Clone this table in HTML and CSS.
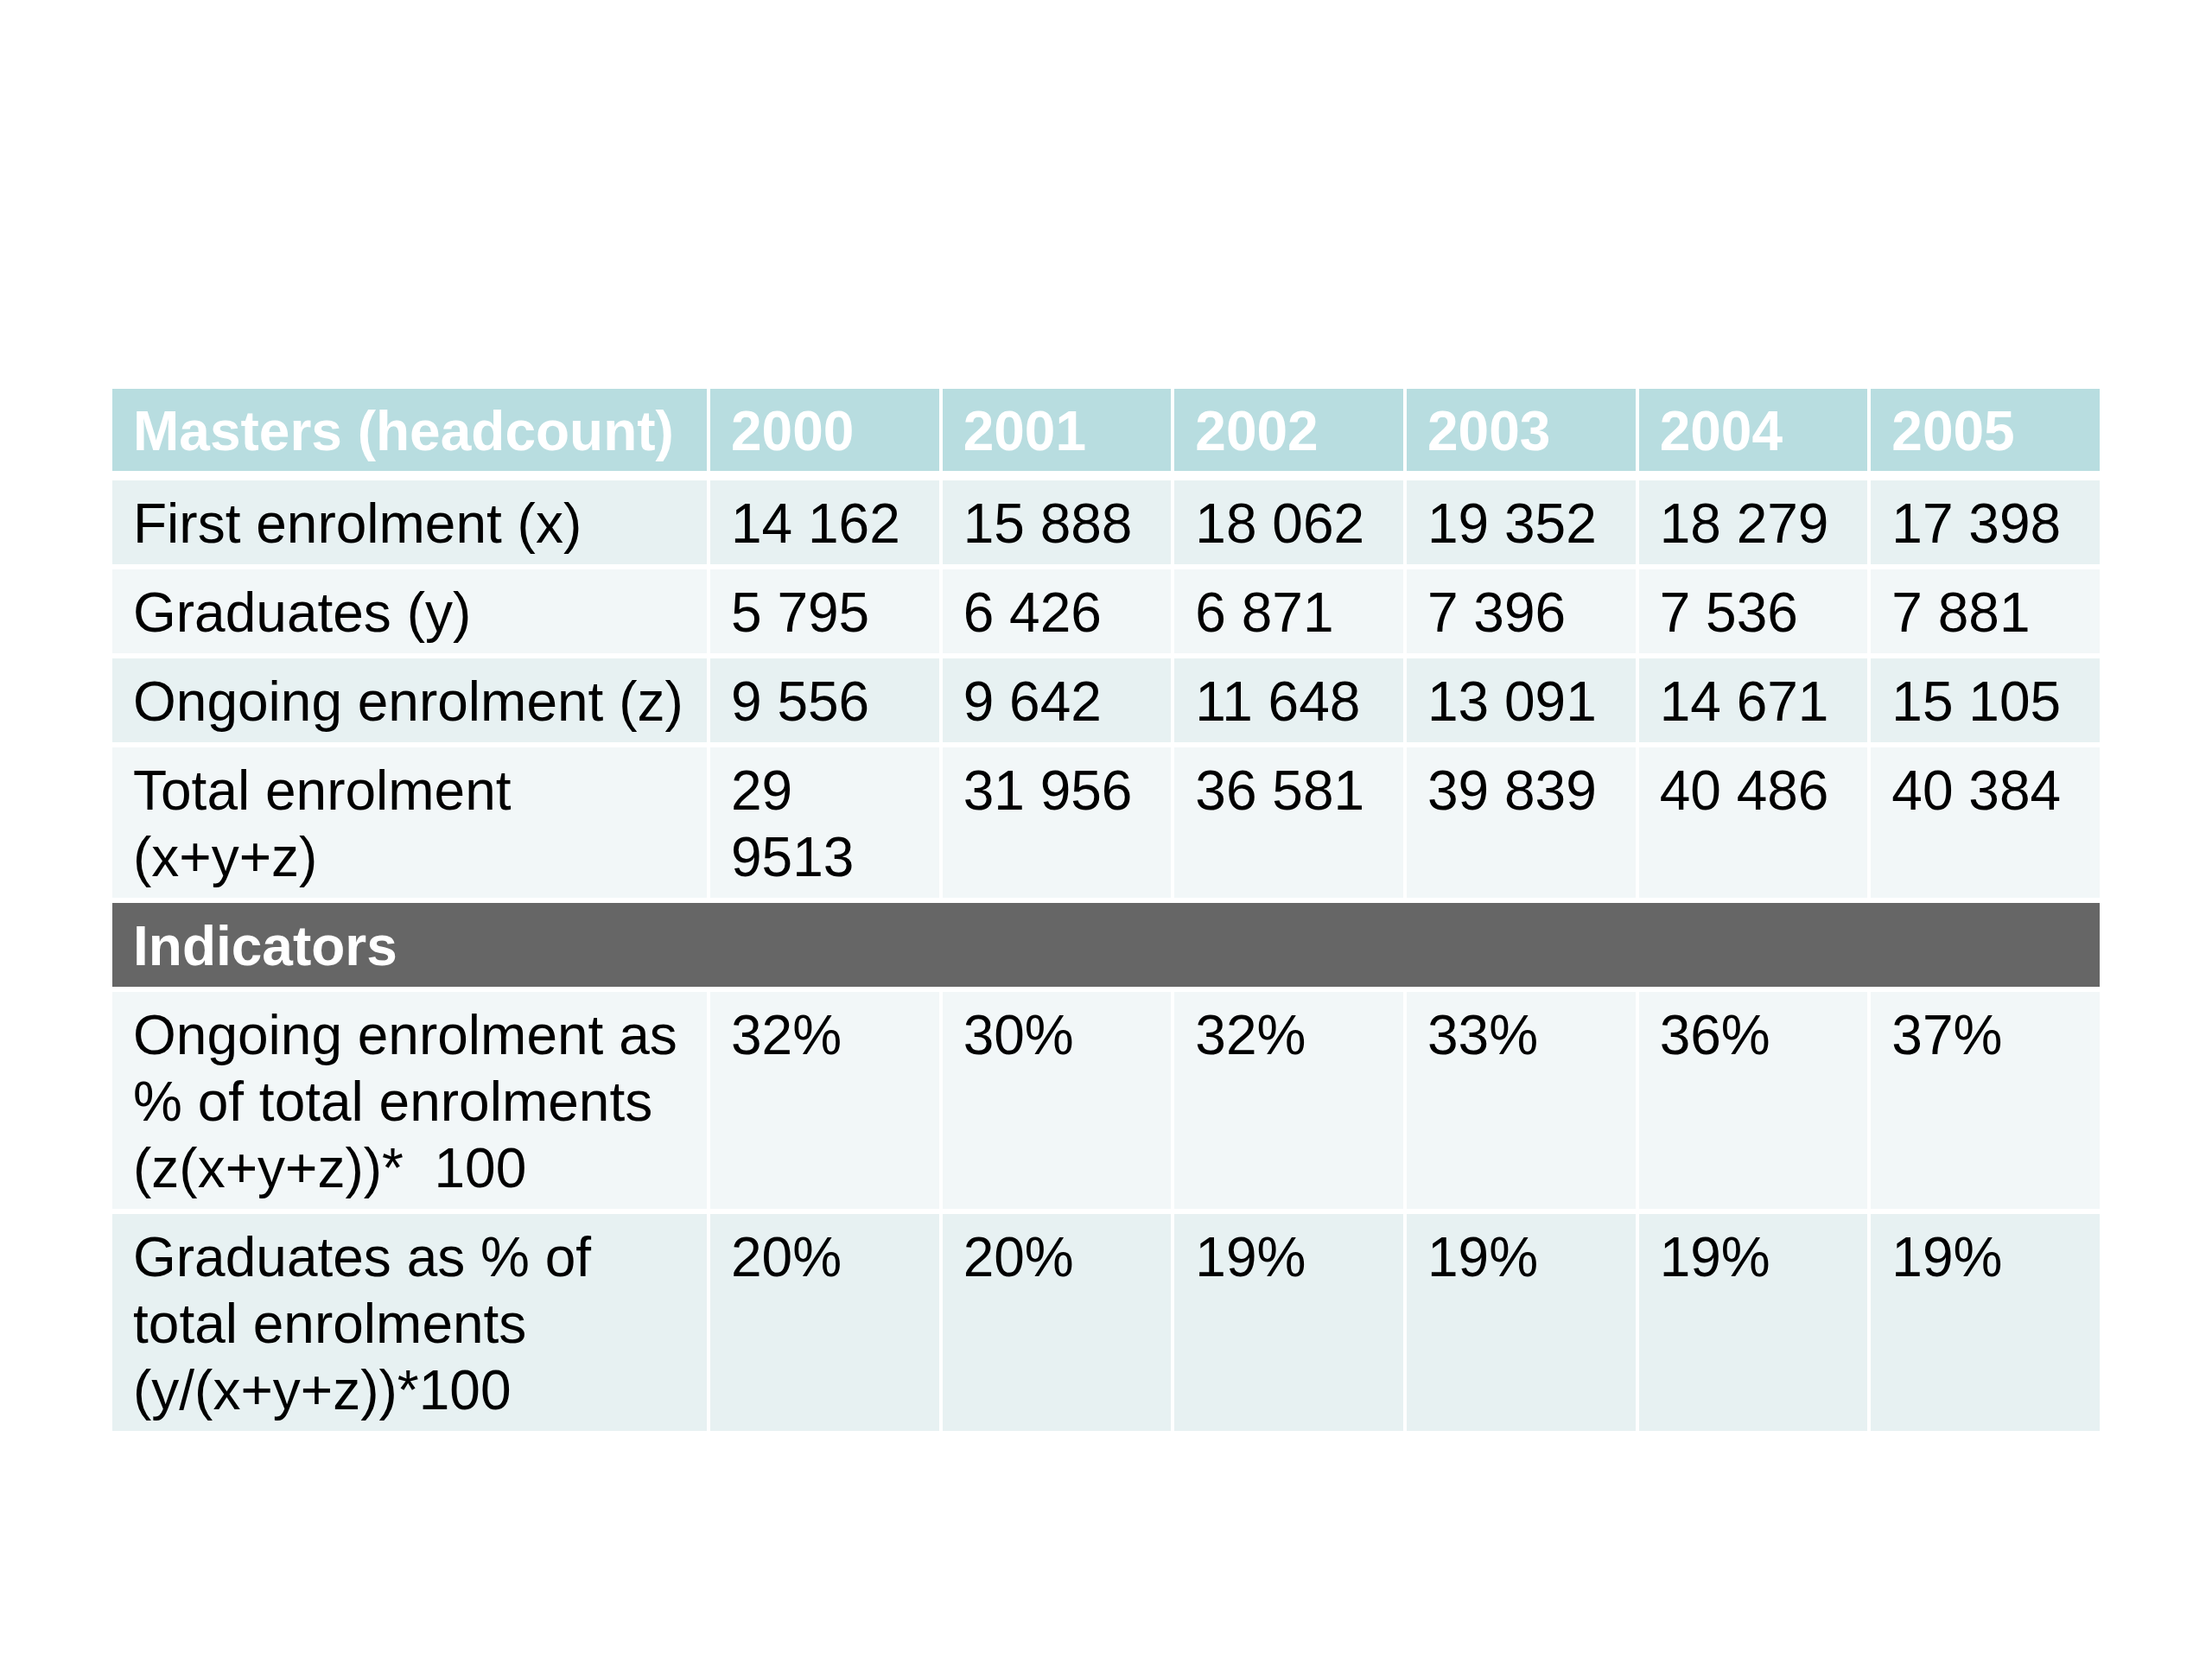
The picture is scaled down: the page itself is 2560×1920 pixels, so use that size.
FILE: index.html
```html
<!DOCTYPE html>
<html lang="en">
<head>
<meta charset="utf-8">
<title>Masters (headcount)</title>
<link rel="stylesheet" href="styles.css">
</head>
<body>
<main class="slide">
  <div class="grid" role="table">
    <div class="cell head first">Masters (headcount)</div>
    <div class="cell head">2000</div>
    <div class="cell head">2001</div>
    <div class="cell head">2002</div>
    <div class="cell head">2003</div>
    <div class="cell head">2004</div>
    <div class="cell head">2005</div>

    <div class="cell dark">First enrolment (x)</div>
    <div class="cell dark">14 162</div>
    <div class="cell dark">15 888</div>
    <div class="cell dark">18 062</div>
    <div class="cell dark">19 352</div>
    <div class="cell dark">18 279</div>
    <div class="cell dark">17 398</div>

    <div class="cell light">Graduates (y)</div>
    <div class="cell light">5 795</div>
    <div class="cell light">6 426</div>
    <div class="cell light">6 871</div>
    <div class="cell light">7 396</div>
    <div class="cell light">7 536</div>
    <div class="cell light">7 881</div>

    <div class="cell dark">Ongoing enrolment (z)</div>
    <div class="cell dark">9 556</div>
    <div class="cell dark">9 642</div>
    <div class="cell dark">11 648</div>
    <div class="cell dark">13 091</div>
    <div class="cell dark">14 671</div>
    <div class="cell dark">15 105</div>

    <div class="cell light">Total enrolment (x+y+z)</div>
    <div class="cell light">29 9513</div>
    <div class="cell light">31 956</div>
    <div class="cell light">36 581</div>
    <div class="cell light">39 839</div>
    <div class="cell light">40 486</div>
    <div class="cell light">40 384</div>

    <div class="cell section">Indicators</div>

    <div class="cell light">Ongoing enrolment as % of total enrolments (z(x+y+z))*&nbsp; 100</div>
    <div class="cell light">32%</div>
    <div class="cell light">30%</div>
    <div class="cell light">32%</div>
    <div class="cell light">33%</div>
    <div class="cell light">36%</div>
    <div class="cell light">37%</div>

    <div class="cell dark">Graduates as % of total enrolments (y/(x+y+z))*100</div>
    <div class="cell dark">20%</div>
    <div class="cell dark">20%</div>
    <div class="cell dark">19%</div>
    <div class="cell dark">19%</div>
    <div class="cell dark">19%</div>
    <div class="cell dark">19%</div>
  </div>
</main>
</body>
</html>
```

FILE: styles.css
```css
html, body {
  margin: 0;
  padding: 0;
  background: #ffffff;
}

.slide {
  width: 2560px;
  height: 1920px;
  box-sizing: border-box;
  padding: 450px 0 0 130px;
  font-family: "Liberation Sans", Arial, Helvetica, sans-serif;
}

.grid {
  width: 2300px;
  display: grid;
  grid-template-columns: 688px repeat(6, 1fr);
  column-gap: 4px;
  row-gap: 6px;
  align-items: stretch;
}

.cell {
  font-size: 64px;
  line-height: 77px;
  color: #000000;
  padding: 12px 20px 8px 24px;
  box-sizing: border-box;
}

.head {
  background: #b8dde0;
  color: #ffffff;
  font-weight: bold;
  padding-top: 11px;
  padding-bottom: 7px;
  margin-bottom: 5px;
  white-space: nowrap;
}

.dark {
  background: #e7f1f2;
}

.light {
  background: #f2f7f8;
}

.section {
  grid-column: 1 / -1;
  background: #666666;
  color: #ffffff;
  font-weight: bold;
}
```
